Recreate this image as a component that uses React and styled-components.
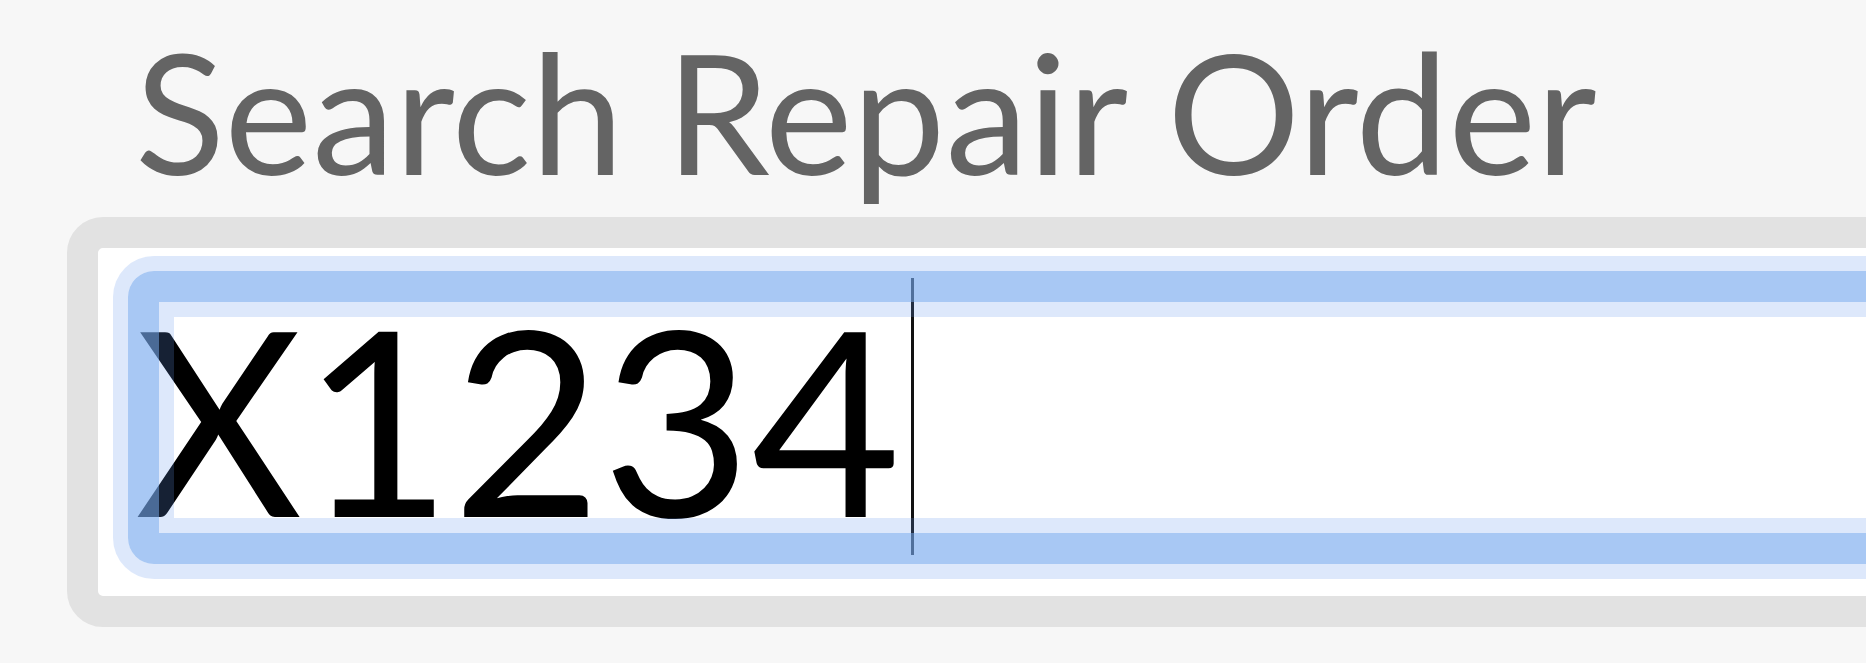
import React from 'react'
import styled, { createGlobalStyle } from 'styled-components'

const GlobalStyle = createGlobalStyle`
  html, body {
    margin: 0;
    padding: 0;
    background: #f7f7f7;
    overflow: hidden;
  }
  body {
    font-family: Lato, 'Open Sans', sans-serif;
  }
`

const Page = styled.div`
  padding: 11px 0 0 67px;
  box-sizing: border-box;
  height: 663px;
`

const Label = styled.label`
  display: block;
  margin-left: 68px;
  font-size: 166px;
  line-height: 1.2;
  height: 206px;
  color: #646464;
  white-space: nowrap;
`

const Field = styled.div`
  position: relative;
  box-sizing: border-box;
  width: 2000px;
  height: 410px;
  border: 31px solid #e2e2e2;
  border-radius: 36px;
  background: #fff;
  padding: 40px 0 0 37px;
`

const ValueRow = styled.div`
  display: flex;
  align-items: flex-start;
`

const Value = styled.span`
  font-size: 258px;
  line-height: 1;
  color: #000;
  white-space: nowrap;
`

const Caret = styled.span`
  width: 3px;
  height: 277px;
  margin: -10px 0 0 10px;
  background: #111;
`

// focus ring painted over the text, so the first glyph gets tinted
const FocusRing = styled.div`
  position: absolute;
  left: 30px;
  top: 23px;
  bottom: 32px;
  right: 30px;
  border: 31px solid rgba(117, 168, 237, 0.63);
  border-radius: 26px;
  box-shadow:
    0 0 0 15px rgba(100, 150, 237, 0.22),
    inset 0 0 0 15px rgba(100, 150, 237, 0.22);
  pointer-events: none;
`

export default function App() {
  return (
    <>
      <GlobalStyle />
      <Page>
        <Label>Search Repair Order</Label>
        <Field>
          <ValueRow>
            <Value>X1234</Value>
            <Caret />
          </ValueRow>
          <FocusRing />
        </Field>
      </Page>
    </>
  )
}
